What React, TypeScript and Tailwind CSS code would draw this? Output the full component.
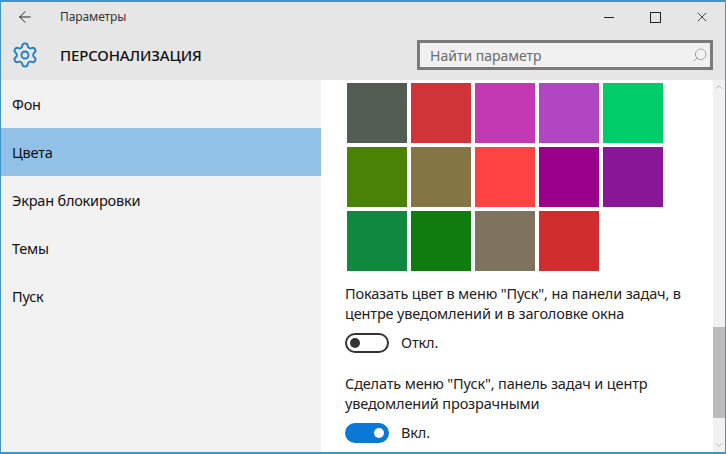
import { ArrowLeft, Search, Settings, X, ChevronUp, ChevronDown } from "lucide-react";

const swatches = [
  "#525e54", "#d13438", "#c239b3", "#b146c2", "#00cc6a",
  "#498205", "#847545", "#ff4343", "#9a0089", "#881798",
  "#10893e", "#107c10", "#7e735f", "#d02e2e",
];

const navItems = ["Фон", "Цвета", "Экран блокировки", "Темы", "Пуск"];

function Toggle({ on, label }: { on: boolean; label: string }) {
  return (
    <div className="flex items-center gap-3 h-5">
      {on ? (
        <div className="w-[44px] h-5 rounded-full bg-[#0a78d7] flex items-center justify-end pr-[5px]">
          <div className="w-[10px] h-[10px] rounded-full bg-white" />
        </div>
      ) : (
        <div className="w-[44px] h-5 rounded-full border-2 border-[#333] bg-white flex items-center pl-[3px]">
          <div className="w-[10px] h-[10px] rounded-full bg-[#333]" />
        </div>
      )}
      <span className="text-[14.5px] tracking-[-0.15px] text-[#222]">{label}</span>
    </div>
  );
}

export default function App() {
  return (
    <div className="w-[726px] h-[454px] flex flex-col border-x border-t-2 border-b-2 border-[#3f94c9] bg-white overflow-hidden font-['Noto_Sans','Open_Sans',sans-serif]">
      {/* title bar + header */}
      <div className="h-[78px] shrink-0 bg-[#e6e6e6] flex flex-col">
        <div className="h-[30px] flex items-center">
          <ArrowLeft className="w-[18px] h-[18px] ml-[15px] text-[#111]" strokeWidth={1.2} />
          <span className="ml-[26px] text-[12px] tracking-[-0.1px] text-[#333]">Параметры</span>
          <div className="ml-auto flex items-center">
            <div className="w-[10px] h-px bg-[#222] mr-[36px]" />
            <div className="w-[11px] h-[11px] border border-[#222] mr-[33px]" />
            <X className="w-[16px] h-[16px] text-[#222] mr-[15px]" strokeWidth={1.2} />
          </div>
        </div>
        <div className="flex-1 flex items-center pb-[2px]">
          <Settings className="w-[28px] h-[28px] ml-[10px] text-[#1f7fc0]" strokeWidth={1.6} />
          <span className="ml-[21px] text-[15px] tracking-[-0.15px] font-medium text-[#111]">ПЕРСОНАЛИЗАЦИЯ</span>
          <div className="ml-auto mr-[12px] w-[296px] h-[30px] border-[3px] border-[#7a7a7a] bg-[#f1f1f1] flex items-center pl-[10px] pr-[2px]">
            <span className="text-[14px] text-[#6b6b6b]">Найти параметр</span>
            <Search className="w-[16px] h-[16px] ml-auto text-[#888] -scale-x-100" strokeWidth={1.1} />
          </div>
        </div>
      </div>

      <div className="flex-1 flex min-h-0">
        {/* sidebar */}
        <nav className="w-[320px] shrink-0 bg-[#f2f2f2] flex flex-col">
          {navItems.map((item) => (
            <div
              key={item}
              className={`h-[48px] flex items-center pl-[11px] pt-[2px] text-[14.5px] tracking-[-0.2px] text-[#111] ${item === "Цвета" ? "bg-[#91c1e7]" : ""}`}
            >
              {item}
            </div>
          ))}
        </nav>

        {/* content */}
        <main className="flex-1 min-w-0 pl-[24px] pt-[3px] overflow-hidden">
          <div className="grid grid-cols-[repeat(5,60px)] gap-1 ml-[2px]">
            {swatches.map((color) => (
              <div key={color} className="h-[60px]" style={{ backgroundColor: color }} />
            ))}
          </div>
          <p className="mt-[12px] w-[350px] text-[14.5px] tracking-[-0.15px] leading-[20px] text-[#222]">
            Показать цвет в меню "Пуск", на панели задач, в центре уведомлений и в заголовке окна
          </p>
          <div className="mt-[10px]">
            <Toggle on={false} label="Откл." />
          </div>
          <p className="mt-[20px] w-[350px] text-[14.5px] tracking-[-0.15px] leading-[20px] text-[#222]">
            Сделать меню "Пуск", панель задач и центр уведомлений прозрачными
          </p>
          <div className="mt-[10px]">
            <Toggle on label="Вкл." />
          </div>
        </main>

        {/* scrollbar */}
        <div className="w-[12px] shrink-0 bg-[#f1f1f1] flex flex-col items-center">
          <ChevronUp className="w-[10px] h-[14px] text-[#aaa]" />
          <div className="mt-[233px] w-full h-[91px] bg-[#bcbcbc]" />
          <ChevronDown className="w-[10px] h-[14px] mt-auto text-[#aaa]" />
        </div>
      </div>
    </div>
  );
}
